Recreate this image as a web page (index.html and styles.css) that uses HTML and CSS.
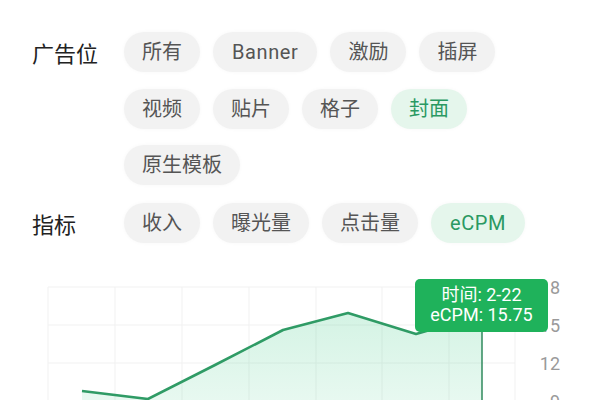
FILE: index.html
```html
<!DOCTYPE html>
<html lang="zh">
<head>
<meta charset="utf-8">
<link rel="stylesheet" href="styles.css">
</head>
<body>
<div class="page">
  <div class="filter">
    <div class="label">广告位</div>
    <div class="pills">
      <span class="pill">所有</span>
      <span class="pill latin">Banner</span>
      <span class="pill">激励</span>
      <span class="pill">插屏</span>
      <span class="pill">视频</span>
      <span class="pill">贴片</span>
      <span class="pill">格子</span>
      <span class="pill active">封面</span>
      <span class="pill">原生模板</span>
    </div>
  </div>
  <div class="filter metrics">
    <div class="label">指标</div>
    <div class="pills">
      <span class="pill">收入</span>
      <span class="pill">曝光量</span>
      <span class="pill">点击量</span>
      <span class="pill latin active">eCPM</span>
    </div>
  </div>
  <div class="chart">
    <svg class="plot" width="600" height="130" viewBox="0 270 600 130">
      <defs>
        <linearGradient id="fill" x1="0" y1="0" x2="0" y2="1">
          <stop offset="0" stop-color="#3cc985" stop-opacity="0.22"/>
          <stop offset="1" stop-color="#3cc985" stop-opacity="0.12"/>
        </linearGradient>
      </defs>
      <g stroke="#f1f1f1" stroke-width="1">
        <line x1="48" y1="286" x2="515" y2="286"/>
        <line x1="48" y1="324" x2="515" y2="324"/>
        <line x1="48" y1="362" x2="515" y2="362"/>
        <line x1="48" y1="400" x2="515" y2="400"/>
        <line x1="48" y1="286" x2="48" y2="400"/>
        <line x1="115" y1="286" x2="115" y2="400"/>
        <line x1="182" y1="286" x2="182" y2="400"/>
        <line x1="249" y1="286" x2="249" y2="400"/>
        <line x1="316" y1="286" x2="316" y2="400"/>
        <line x1="382" y1="286" x2="382" y2="400"/>
        <line x1="449" y1="286" x2="449" y2="400"/>
        <line x1="515" y1="286" x2="515" y2="400"/>
      </g>
      <path d="M82 390 L148 398 L215 364 L283 329 L348 312 L416 333 L482 314 L482 400 L82 400 Z" fill="url(#fill)"/>
      <polyline points="82,390 148,398 215,364 283,329 348,312 416,333 482,314" fill="none" stroke="#2f9b65" stroke-width="2.6" stroke-linejoin="round"/>
      <line x1="482" y1="314" x2="482" y2="400" stroke="#2f8a5c" stroke-width="1.5"/>
      <g class="axis" font-size="18" fill="#9a9a9a" text-anchor="end">
        <text x="560" y="293">18</text>
        <text x="560" y="331">15</text>
        <text x="560" y="369">12</text>
        <text x="560" y="407">9</text>
      </g>
    </svg>
    <div class="tip">
      <div>时间: 2-22</div>
      <div>eCPM: 15.75</div>
    </div>
  </div>
</div>
</body>
</html>
```

FILE: styles.css
```css
html, body {
  margin: 0;
  padding: 0;
  background: #ffffff;
}
body {
  font-family: Roboto, "Noto Sans CJK SC", sans-serif;
  width: 600px;
  height: 400px;
  overflow: hidden;
}
.page {
  padding-top: 32px;
}
.filter {
  display: grid;
  grid-template-columns: 92px 436px;
  padding-left: 32px;
}
.metrics {
  margin-top: 18px;
}
.label {
  height: 40px;
  line-height: 40px;
  font-size: 22px;
  color: #222;
  font-family: "Noto Sans CJK SC", sans-serif;
}
.pills {
  display: flex;
  flex-wrap: wrap;
  column-gap: 13px;
  row-gap: 16.5px;
}
.pill {
  height: 40px;
  line-height: 40px;
  padding: 0 18px;
  border-radius: 20px;
  background: #f2f2f2;
  color: #555;
  font-size: 20px;
  box-shadow: 0 0 4px rgba(0,0,0,0.03);
}
.pill.latin {
  letter-spacing: 0.6px;
  padding: 0 19px;
}
.pill.active {
  background: #e5f6ec;
  color: #2a9962;
}
.chart {
  position: relative;
  margin-top: 28px;
  height: 130px;
}
.plot {
  display: block;
}
.axis {
  font-family: Roboto, sans-serif;
}
.tip {
  position: absolute;
  left: 415px;
  top: 8px;
  width: 133px;
  height: 53px;
  box-sizing: border-box;
  padding-top: 6px;
  background: #1fb25b;
  border-radius: 5px;
  color: #fff;
  font-size: 18px;
  line-height: 20px;
  text-align: center;
  font-family: Roboto, "Noto Sans CJK SC", sans-serif;
}
```
